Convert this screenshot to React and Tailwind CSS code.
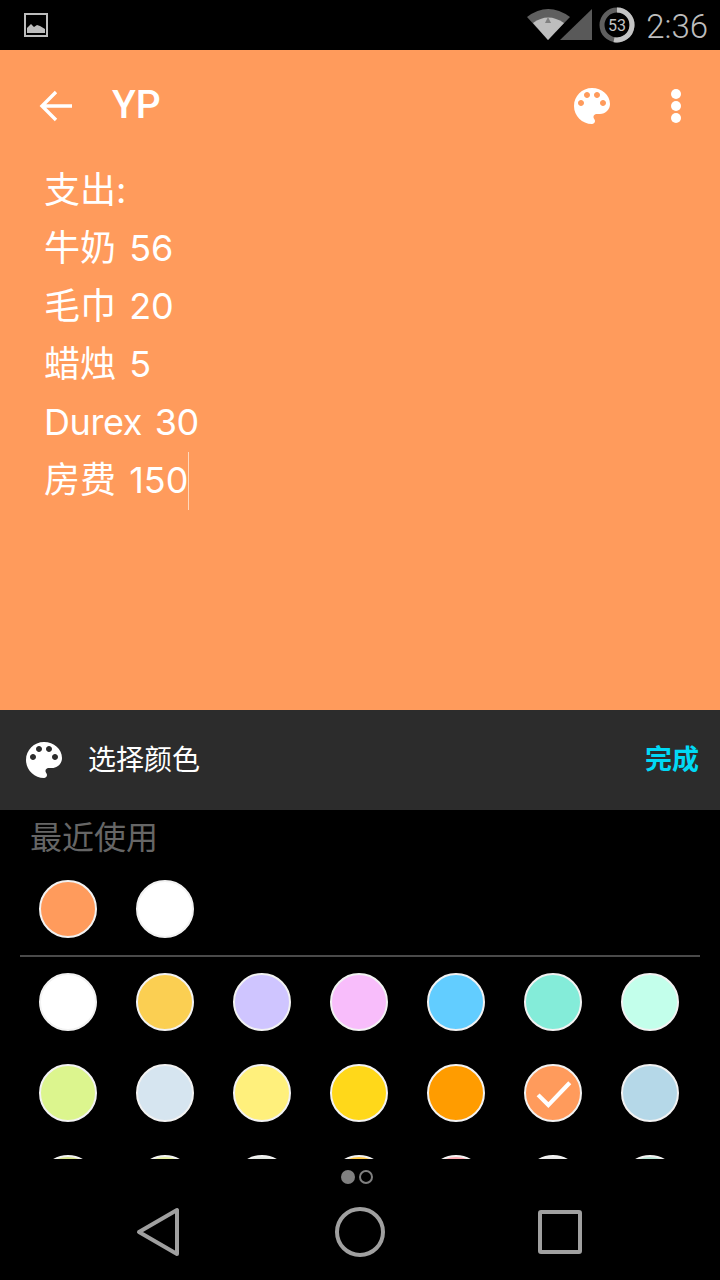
import { Fragment } from "react";

const PALETTE =
  "M12 3c-4.97 0-9 4.03-9 9s4.03 9 9 9c.83 0 1.5-.67 1.5-1.5 0-.39-.15-.74-.39-1.01-.23-.26-.38-.61-.38-.99 0-.83.67-1.5 1.5-1.5H16c2.76 0 5-2.24 5-5 0-4.42-4.03-8-9-8zm-5.5 9c-.83 0-1.5-.67-1.5-1.5S5.67 9 6.5 9 8 9.67 8 10.5 7.33 12 6.5 12zm3-4C8.67 8 8 7.33 8 6.5S8.67 5 9.5 5s1.5.67 1.5 1.5S10.33 8 9.5 8zm5 0c-.83 0-1.5-.67-1.5-1.5S13.67 5 14.5 5s1.5.67 1.5 1.5S15.33 8 14.5 8zm3 4c-.83 0-1.5-.67-1.5-1.5S16.67 9 17.5 9s1.5.67 1.5 1.5-.67 1.5-1.5 1.5z";

const lines = ["支出:", "牛奶 56", "毛巾 20", "蜡烛 5"];

const rows = [
  ["#ffffff", "#fbcf52", "#cfc5ff", "#f8bdfb", "#62cdff", "#84ecd9", "#c3ffeb"],
  ["#dcf58e", "#d6e5f0", "#fff07c", "#ffd81a", "#ff9c00", "#ff9b5c", "#b5d8e8"],
  ["#d5e28a", "#e6f0a0", "#e0e6e0", "#ffc844", "#ffa8b0", "#e6e6e6", "#b8e4d4"],
];

function Palette({ className }) {
  return (
    <svg viewBox="0 0 24 24" className={className}>
      <path d={PALETTE} fill="#fff" fillRule="evenodd" />
    </svg>
  );
}

function Swatch({ color, checked }) {
  return (
    <div
      className="w-[58px] h-[58px] shrink-0 rounded-full border-2 border-[#f2f2f2] flex items-center justify-center"
      style={{ backgroundColor: color }}
    >
      {checked && (
        <svg viewBox="0 0 58 58" className="w-[58px] h-[58px]">
          <path d="M13 31 L24 42 L47 18" fill="none" stroke="#fff" strokeWidth="4.5" />
        </svg>
      )}
    </div>
  );
}

function StatusBar() {
  return (
    <div className="h-[50px] bg-black flex items-center shrink-0 pl-[24px] pr-[12px]">
      <svg viewBox="0 0 24 24" className="w-[24px] h-[24px] shrink-0">
        <rect x="1" y="1" width="22" height="22" fill="none" stroke="#bdbdbd" strokeWidth="2" />
        <path d="M3 20 V15 L7 11 L10 14 L13 12 L16 13 L21 16 V20 Z" fill="#bdbdbd" />
      </svg>
      <div className="flex-1" />
      <svg viewBox="0 0 66 32" className="w-[66px] h-[32px] shrink-0">
        <path d="M33 31 L65 0 V31 Z" fill="#595959" />
        <path d="M0 8 Q21 -8 43 8 L21 31 Z" fill="#5f5f5f" />
        <path d="M6 14 Q21 3 37 14 L21 31 Z" fill="#bdbdbd" />
        <path d="M21 8 L24 14 H18 Z" fill="#808080" />
      </svg>
      <svg viewBox="0 0 36 36" className="w-[36px] h-[36px] shrink-0 ml-[6px]">
        <circle cx="18" cy="18" r="15" fill="none" stroke="#5f5f5f" strokeWidth="5" />
        <path d="M18 3 A15 15 0 1 1 15 32.7" fill="none" stroke="#c4c4c4" strokeWidth="5" />
        <text x="18" y="24" textAnchor="middle" fontSize="16" fill="#c4c4c4" fontFamily="Roboto, sans-serif">
          53
        </text>
      </svg>
      <span className="ml-[11px] mt-[2px] text-[33px] leading-none text-[#bdbdbd] font-['Roboto',sans-serif] font-light">2:36</span>
    </div>
  );
}

function Header() {
  return (
    <div className="h-[111px] shrink-0 flex items-center pl-[38px]">
      <svg viewBox="0 0 36 36" className="w-[36px] h-[36px] shrink-0">
        <path d="M34 18 H5 M18 4 L4 18 L18 32" fill="none" stroke="#fff" strokeWidth="3.4" />
      </svg>
      <span className="ml-[38px] text-[39px] leading-none font-medium text-white font-['Roboto',sans-serif]">YP</span>
      <div className="flex-1" />
      <Palette className="w-[48px] h-[48px] shrink-0 mr-[55px]" />
      <div className="flex flex-col gap-[2px] mr-[39px] shrink-0 pt-[1px]">
        <span className="w-[10px] h-[10px] rounded-full bg-white" />
        <span className="w-[10px] h-[10px] rounded-full bg-white" />
        <span className="w-[10px] h-[10px] rounded-full bg-white" />
      </div>
    </div>
  );
}

function Note() {
  return (
    <div className="flex-1 pl-[44px] text-white text-[36px] leading-[58px] [word-spacing:3px] font-['Inter','Noto_Sans_CJK_SC',sans-serif]">
      {lines.map((l) => (
        <div key={l} className="h-[58px]">{l}</div>
      ))}
      <div className="h-[58px] tracking-[-0.4px]">Durex 30</div>
      <div className="h-[58px] flex">
        <span>房费 150</span>
        <span className="w-px h-[58px] mt-[1px] bg-[#ffd9bd]" />
      </div>
    </div>
  );
}

function Picker() {
  return (
    <div className="h-[349px] overflow-hidden shrink-0 bg-black">
      <div className="pl-[30px] pt-[7px] h-[70px] text-[32px] leading-[36px] text-[#666666] font-['Noto_Sans_CJK_SC',sans-serif]">最近使用</div>
      <div className="flex gap-[39px] pl-[39px]">
        <Swatch color="#ff9b5c" />
        <Swatch color="#ffffff" />
      </div>
      <div className="mx-[20px] mt-[17px] mb-[16px] h-[2px] bg-[#4a4a4a]" />
      <div className="flex flex-col gap-[33px]">
        {rows.map((row, i) => (
          <div key={i} className="flex gap-[39px] pl-[39px]">
            {row.map((c, j) => (
              <Fragment key={j}>
                <Swatch color={c} checked={i === 1 && j === 5} />
              </Fragment>
            ))}
          </div>
        ))}
      </div>
    </div>
  );
}

function NavBar() {
  return (
    <div className="flex-1 bg-black flex flex-col items-center">
      <div className="flex items-center gap-[4px] mt-[11px] h-[14px] pr-[6px]">
        <span className="w-[14px] h-[14px] rounded-full bg-[#808080]" />
        <span className="w-[14px] h-[14px] rounded-full border-2 border-[#808080]" />
      </div>
      <div className="flex items-center mt-[22px] w-full pl-[134px]">
        <svg viewBox="0 0 48 52" className="w-[48px] h-[52px] shrink-0">
          <path d="M43 4 V48 L5 26 Z" fill="none" stroke="#a0a0a0" strokeWidth="4" strokeLinejoin="round" />
        </svg>
        <svg viewBox="0 0 52 52" className="w-[52px] h-[52px] shrink-0 ml-[152px]">
          <circle cx="26" cy="26" r="23" fill="none" stroke="#a0a0a0" strokeWidth="4" />
        </svg>
        <svg viewBox="0 0 44 44" className="w-[44px] h-[44px] shrink-0 ml-[152px]">
          <rect x="2" y="2" width="40" height="40" rx="1" fill="none" stroke="#a0a0a0" strokeWidth="4" />
        </svg>
      </div>
    </div>
  );
}

export default function App() {
  return (
    <div className="w-[720px] h-[1280px] flex flex-col bg-black overflow-hidden font-['Noto_Sans_CJK_SC',sans-serif]">
      <StatusBar />
      <div className="h-[660px] shrink-0 bg-[#ff9b5c] flex flex-col">
        <Header />
        <Note />
      </div>
      <div className="h-[100px] shrink-0 bg-[#2c2c2c] flex items-center pl-[20px] pr-[21px]">
        <Palette className="w-[48px] h-[48px] shrink-0" />
        <span className="ml-[20px] mb-[4px] text-[28px] leading-none text-white">选择颜色</span>
        <div className="flex-1" />
        <span className="mb-[6px] text-[27px] leading-none font-bold text-[#00d9f5]">完成</span>
      </div>
      <Picker />
      <NavBar />
    </div>
  );
}
